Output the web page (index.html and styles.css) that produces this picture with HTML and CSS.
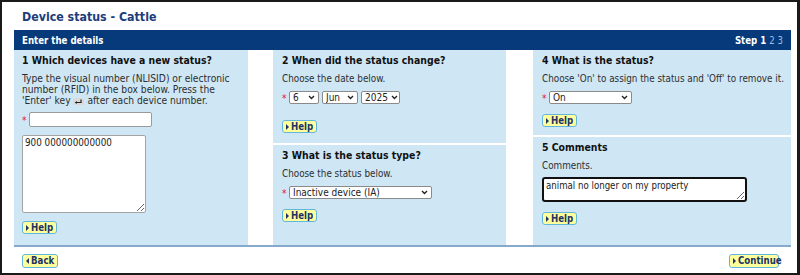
FILE: index.html
```html
<!DOCTYPE html>
<html>
<head>
<meta charset="utf-8">
<link rel="stylesheet" href="styles.css">
</head>
<body>
<div class="frame">
  <h1 class="title">Device status - Cattle</h1>
  <div class="panel">
    <div class="bar">
      <span>Enter the details</span>
      <span class="steps">Step 1 <span class="other">2 3</span></span>
    </div>
    <div class="cols">
      <div class="col">
        <section class="box">
          <h2>1 Which devices have a new status?</h2>
          <p class="intro">Type the visual number (NLISID) or electronic number (RFID) in the box below. Press the 'Enter' key <svg class="enter" width="11" height="7" viewBox="0 0 11 7"><rect x="0" y="0" width="11" height="7" rx="1.5" fill="#d9d9d9"/><path d="M8 1.5 V4.5 H3" stroke="#222" stroke-width="1.2" fill="none"/><path d="M1.8 4.5 L3.8 3 V6 Z" fill="#222"/></svg> after each device number.</p>
          <div class="field"><span class="req">*</span><input class="text" type="text"></div>
          <textarea class="list">900 000000000000</textarea>
          <span class="btn help"><span class="tri"></span>Help</span>
        </section>
      </div>
      <div class="gap"></div>
      <div class="col">
        <section class="box">
          <h2>2 When did the status change?</h2>
          <p>Choose the date below.</p>
          <div class="field date"><span class="req">*</span>
            <span class="sel s-day"><select><option>6</option></select><svg class="chev" width="7" height="5" viewBox="0 0 7 5"><path d="M1 1 L3.5 3.5 L6 1" stroke="#222" stroke-width="1.4" fill="none"/></svg></span>
            <span class="sel s-mon"><select><option>Jun</option></select><svg class="chev" width="7" height="5" viewBox="0 0 7 5"><path d="M1 1 L3.5 3.5 L6 1" stroke="#222" stroke-width="1.4" fill="none"/></svg></span>
            <span class="sel s-yr"><select><option>2025</option></select><svg class="chev" width="7" height="5" viewBox="0 0 7 5"><path d="M1 1 L3.5 3.5 L6 1" stroke="#222" stroke-width="1.4" fill="none"/></svg></span>
          </div>
          <span class="btn help"><span class="tri"></span>Help</span>
        </section>
        <section class="box grow">
          <h2>3 What is the status type?</h2>
          <p>Choose the status below.</p>
          <div class="field"><span class="req">*</span><span class="sel s-type"><select><option>Inactive device (IA)</option></select><svg class="chev" width="7" height="5" viewBox="0 0 7 5"><path d="M1 1 L3.5 3.5 L6 1" stroke="#222" stroke-width="1.4" fill="none"/></svg></span></div>
          <span class="btn help"><span class="tri"></span>Help</span>
        </section>
      </div>
      <div class="gap"></div>
      <div class="col">
        <section class="box b4">
          <h2>4 What is the status?</h2>
          <p>Choose 'On' to assign the status and 'Off' to remove it.</p>
          <div class="field"><span class="req">*</span><span class="sel s-on"><select><option>On</option></select><svg class="chev" width="7" height="5" viewBox="0 0 7 5"><path d="M1 1 L3.5 3.5 L6 1" stroke="#222" stroke-width="1.4" fill="none"/></svg></span></div>
          <span class="btn help"><span class="tri"></span>Help</span>
        </section>
        <section class="box grow">
          <h2>5 Comments</h2>
          <p>Comments.</p>
          <textarea class="comment">animal no longer on my property</textarea>
          <span class="btn help"><span class="tri"></span>Help</span>
        </section>
      </div>
    </div>
    <div class="footer">
      <span class="btn back"><span class="tri left"></span>Back</span>
      <span class="btn next"><span class="tri"></span>Continue</span>
    </div>
  </div>
</div>
</body>
</html>
```

FILE: styles.css
```css
html, body {
  margin: 0;
  padding: 0;
  background: #fff;
}
.frame {
  box-sizing: border-box;
  width: 800px;
  height: 275px;
  border: 2px solid #1a1a1a;
  border-right-width: 3px;
  font-family: "DejaVu Sans Condensed", "DejaVu Sans", sans-serif;
  font-size: 9.8px;
  color: #2e2e2e;
}
.title {
  margin: 7px 0 5px 20px;
  font-size: 12.3px;
  line-height: 16px;
  font-weight: bold;
  color: #1c3c7c;
}
.panel {
  margin-left: 12px;
  width: 777px;
}
.bar {
  height: 20px;
  background: #063a7a;
  color: #fff;
  font-weight: bold;
  font-size: 9.6px;
  display: flex;
  align-items: center;
  justify-content: space-between;
  padding: 0 8px;
}
.steps .other {
  color: #9cc0ee;
  font-weight: normal;
}
.cols {
  display: grid;
  grid-template-columns: 234px 25px 233px 27px 258px;
  grid-template-rows: 195px;
  height: 195px;
}
.col {
  display: flex;
  flex-direction: column;
  gap: 2px;
  min-height: 0;
}
.box {
  background: #cfe7f5;
  padding: 4px 4px 10px 9px;
  display: flex;
  flex-direction: column;
  align-items: flex-start;
}
.col:first-child .box {
  flex: 1;
  padding-left: 8px;
  padding-bottom: 0;
}
.grow {
  flex: 1;
}
h2 {
  margin: 0 0 7px;
  font-size: 10.4px;
  line-height: 12px;
  font-weight: bold;
  color: #111;
}
p {
  margin: 0 0 7px;
  line-height: 11px;
}
.intro {
  max-width: 212px;
  font-size: 10.2px;
  margin-bottom: 6px;
}
.enter {
  vertical-align: -1px;
}
.field {
  display: flex;
  align-items: center;
  gap: 2px;
  margin-bottom: 10px;
}
.req {
  color: #e02020;
  font-size: 10px;
  width: 5px;
  line-height: 8px;
  padding-top: 3px;
}
.text {
  box-sizing: border-box;
  width: 123px;
  height: 15px;
  border: 1px solid #9a9a9a;
  border-radius: 2px;
  background: #fff;
  margin: 0;
  padding: 0 2px;
}
.list {
  box-sizing: border-box;
  width: 124px;
  height: 78px;
  margin: -2px 0 8px;
  border: 1px solid #a4a4a4;
  border-radius: 2px;
  padding: 1px 2px;
  font-family: inherit;
  font-size: 9.8px;
  color: #222;
  resize: both;
}
.sel {
  position: relative;
  display: inline-block;
  height: 13px;
}
.sel select {
  appearance: none;
  -webkit-appearance: none;
  box-sizing: border-box;
  display: block;
  width: 100%;
  height: 13px;
  margin: 0;
  padding: 0 0 0 3px;
  border: 1px solid #8a8a8a;
  border-radius: 2px;
  background: #fff;
  font-family: inherit;
  font-size: 10px;
  line-height: 11px;
  color: #222;
}
.chev {
  position: absolute;
  right: 4px;
  top: 4px;
  pointer-events: none;
}
.date {
  gap: 3px;
  margin-bottom: 16px;
}
.date .req { margin-right: -1px; }
.s-day { width: 30px; }
.s-mon { width: 36px; }
.s-yr { width: 39px; }
.s-yr .chev { right: 2px; }
.s-type { width: 143px; }
.s-on { width: 83px; }
.b4 {
  padding-bottom: 8px;
}
.b4 .field { margin-bottom: 10px; }
.comment {
  box-sizing: border-box;
  width: 205px;
  height: 25px;
  margin: -1px 0 10px;
  border: 2px solid #111;
  border-radius: 3px;
  padding: 1px 2px;
  font-family: inherit;
  font-size: 9.6px;
  color: #222;
  resize: both;
}
.btn {
  box-sizing: border-box;
  display: inline-flex;
  align-items: center;
  gap: 2px;
  height: 13px;
  padding: 0 3px 0 3px;
  border: 1.5px solid #62b6de;
  border-radius: 3px;
  background: #ffff9c;
  color: #1d3466;
  font-weight: bold;
  font-size: 9.6px;
  line-height: 10px;
}
.tri {
  width: 0;
  height: 0;
  border-top: 3px solid transparent;
  border-bottom: 3px solid transparent;
  border-left: 3px solid #1d3466;
}
.tri.left {
  border-left: 0;
  border-right: 3px solid #1d3466;
}
.footer {
  border-top: 2px solid #86a9cc;
  display: flex;
  justify-content: space-between;
  padding: 7px 12px 0 8px;
}
.footer .btn {
  height: 14px;
}
.back { width: 36px; }
.next { width: 50px; }
```
